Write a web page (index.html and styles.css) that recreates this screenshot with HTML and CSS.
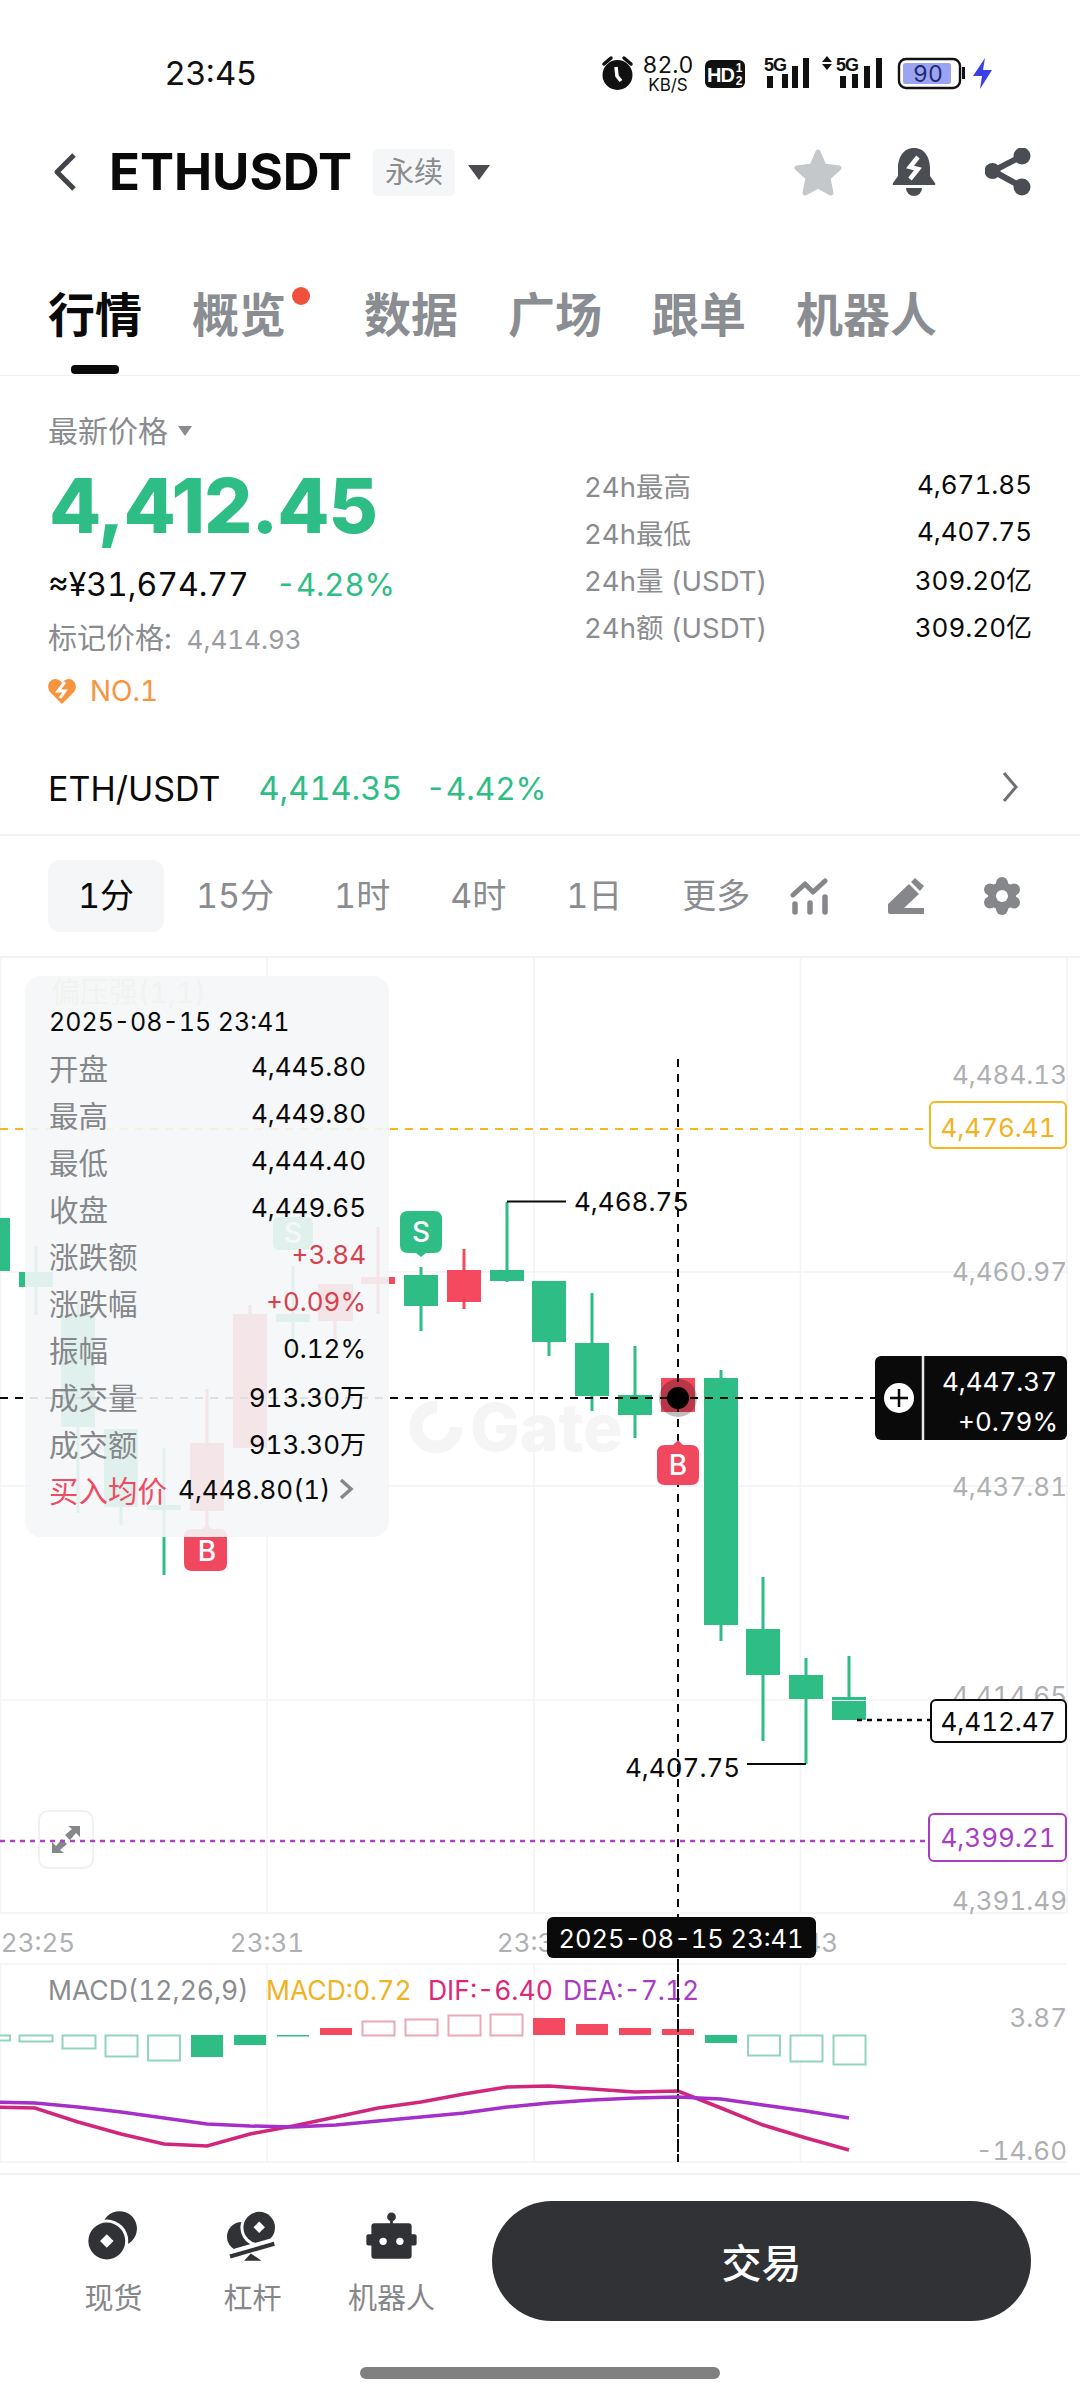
FILE: index.html
```html
<!DOCTYPE html>
<html lang="zh">
<head>
<meta charset="utf-8">
<title>ETHUSDT</title>
<link rel="stylesheet" href="styles.css">
</head>
<body>
<div class="page">
  <div class="status">
    <span class="clock">23:45</span>
    <svg class="status-icons" viewBox="600 50 400 45" width="400" height="45">
      <circle cx="617.5" cy="74" r="15" fill="#111"/>
      <path d="M604 63l7-6M631 63l-7-6" stroke="#111" stroke-width="3.5" stroke-linecap="round"/>
      <path d="M616 66l1 9 4 5" stroke="#fff" stroke-width="3.5" fill="none"/>
      <text class="st-num" x="668" y="72">82.0</text>
      <text class="st-unit" x="668" y="90">KB/S</text>
      <rect x="705" y="59" width="40" height="28" rx="6" fill="#111"/>
      <text class="st-hd" x="707" y="81">HD</text>
      <text class="st-hd2" x="739" y="71">1</text>
      <text class="st-hd2" x="739" y="84">2</text>
      <text class="st-5g" x="764" y="70">5G</text>
      <path d="M767 75h6v12h-6zM782 73h6v14h-6zM792 65h6v22h-6zM803 57h6v30h-6z" fill="#111"/>
      <path d="M827 55l5 6h-10zM827 69l5-6h-10z" fill="#111"/>
      <text class="st-5g" x="836" y="70">5G</text>
      <path d="M840 75h6v12h-6zM852 73h6v14h-6zM864 65h6v22h-6zM876 57h6v30h-6z" fill="#111"/>
      <rect x="899" y="58" width="61" height="29" rx="7" fill="#fff" stroke="#111" stroke-width="2.4"/>
      <rect x="903" y="62" width="48" height="21" rx="2" fill="#9aa4f2"/>
      <path d="M962 66h3v12h-3z" fill="#111"/>
      <text class="st-batt" x="928" y="81">90</text>
      <path d="M985 57l-12 18h9l-2 13 12-19h-9z" fill="#3a40e8"/>
    </svg>
  </div>

  <div class="header">
    <svg class="back" width="26" height="40" viewBox="0 0 26 40"><path d="M22 3L5 20l17 17" fill="none" stroke="#41444a" stroke-width="5" stroke-linejoin="round"/></svg>
    <span class="symbol">ETHUSDT</span>
    <span class="tag">永续</span>
    <span class="tri tri-big"></span>
    <div class="header-actions">
      <svg width="50" height="48" viewBox="0 0 50 48"><path d="M25 4l6 14 15 2-11 10 3 15-13-7-13 7 3-15L4 20l15-2z" fill="#c4c8ca" stroke="#c4c8ca" stroke-width="5" stroke-linejoin="round"/></svg>
      <svg width="44" height="48" viewBox="0 0 44 48"><path d="M22 0C11 0 6 10 6 20v8l-5 7q-1 2 1 2h40q2 0 1-2l-5-7v-8C38 10 33 0 22 0z" fill="#4b4d55"/><path d="M14 40h16a8 8 0 0 1-16 0z" fill="#4b4d55"/><path d="M26 9l-8 10 8 2-8 10" fill="none" stroke="#fff" stroke-width="4.5"/></svg>
      <svg width="46" height="48" viewBox="0 0 46 48"><path d="M37 8L8 23l29 16" fill="none" stroke="#4b4d55" stroke-width="6"/><circle cx="37" cy="8" r="8.5" fill="#4b4d55"/><circle cx="7.500" cy="23" r="8" fill="#4b4d55"/><circle cx="37" cy="39" r="8.5" fill="#4b4d55"/></svg>
    </div>
  </div>

  <div class="tabs">
    <div class="tab tab-active">行情<i class="tab-bar"></i></div>
    <div class="tab tab-dot">概览<i class="dot"></i></div>
    <div class="tab">数据</div>
    <div class="tab">广场</div>
    <div class="tab">跟单</div>
    <div class="tab">机器人</div>
  </div>

  <div class="quote">
    <div class="quote-left">
      <div class="latest">最新价格<span class="tri tri-small"></span></div>
      <div class="price">4,412.45</div>
      <div class="cny"><span class="cny-val">≈¥31,674.77</span><span class="green cny-pct">-4.28%</span></div>
      <div class="mark">标记价格: <span class="mark-num">4,414.93</span></div>
      <div class="rank">
        <svg width="28" height="26" viewBox="0 0 28 26"><path d="M14 26L2 14C-2 9 1 1 7 1c3 0 5 1 7 4 2-3 4-4 7-4 6 0 9 8 5 13z" fill="#f7953f"/><path d="M17 4l-7 9h7l-5 7" fill="none" stroke="#fff" stroke-width="3"/></svg>
        <span>NO.1</span>
      </div>
    </div>
    <div class="quote-right">
      <div class="stat"><span>24h最高</span><b>4,671.85</b></div>
      <div class="stat"><span>24h最低</span><b>4,407.75</b></div>
      <div class="stat"><span>24h量 (USDT)</span><b>309.20亿</b></div>
      <div class="stat"><span>24h额 (USDT)</span><b>309.20亿</b></div>
    </div>
  </div>

  <div class="spot">
    <span class="spot-name">ETH/USDT</span>
    <span class="green spot-price">4,414.35</span>
    <span class="green spot-change">-4.42%</span>
    <svg class="spot-arrow" width="16" height="32" viewBox="0 0 16 32"><path d="M2 2l12 14L2 30" fill="none" stroke="#6d7075" stroke-width="3"/></svg>
  </div>

  <div class="intervals">
    <div class="iv-list">
      <span class="iv iv-active">1分</span>
      <span class="iv">15分</span>
      <span class="iv">1时</span>
      <span class="iv">4时</span>
      <span class="iv">1日</span>
      <span class="iv">更多</span>
    </div>
    <div class="iv-icons">
      <svg width="38" height="38" viewBox="0 0 38 38"><path d="M3 18l12-11 8 8L35 4" fill="none" stroke="#85878b" stroke-width="5" stroke-linecap="round" stroke-linejoin="round"/><path d="M6 27v8M21 26v9M36 20v15" transform="translate(-1 0)" stroke="#85878b" stroke-width="5.500" stroke-linecap="round"/></svg>
      <svg width="36" height="36" viewBox="0 0 36 36"><path d="M0 26L21 6l10 10-15 14h20v6H2q-2 0-2-2z" fill="#85878b"/><path d="M23 4l4-4 9 8-4 5z" fill="#85878b"/></svg>
      <svg width="36" height="38" viewBox="0 0 36 38"><g fill="#85878b"><circle cx="18" cy="19" r="14"/><circle cx="18" cy="6" r="6"/><circle cx="18" cy="32" r="6"/><circle cx="6" cy="12.500" r="6"/><circle cx="30" cy="12.500" r="6"/><circle cx="6" cy="25.500" r="6"/><circle cx="30" cy="25.500" r="6"/></g><circle cx="18" cy="19" r="6" fill="#fff"/></svg>
    </div>
  </div>

  <div class="chart">
    <svg class="chart-svg" viewBox="0 958 1080 1215" width="1080" height="1215">
      <!-- grid -->
      <path class="grid" d="M.5 958V1913M267 958V1913M534 958V1913M800.500 958V1913M1067 958V1913M.5 1964V2162M267 1964V2162M534 1964V2162M800.500 1964V2162M0 1272H1067M0 1486H1067M0 1700H1067M0 1913H1067M0 1964H1067M0 2162H1067"/>

      <!-- watermark -->
      <circle class="wm-ring" cx="436" cy="1427" r="20" stroke-dasharray="95 40"/>
      <text class="wm" x="470" y="1451">Gate</text>

      <text class="legend-faint" x="51" y="992">偏压强(1,1)</text>

      <!-- candles -->
      <path class="wick-up" d="M849 1656V1697M806 1658V1764M763 1577V1741M721 1370V1641M635 1346V1438M592 1293V1411M549 1281V1356M507 1202V1282M421 1267V1331M293 1266V1356M164 1448V1575M121 1429V1525M78 1300V1513M36 1246V1315"/>
      <path class="wick-down" d="M464 1249V1309M378 1227V1314M335 1284V1340M250 1305V1448M207 1389V1529"/>
      <path class="body-up" d="M832 1697h34v23h-34zM789 1675h34v24h-34zM746 1629h34v46h-34zM704 1378h34v247h-34zM618 1395h34v20h-34zM575 1343h34v53h-34zM532 1281h34v61h-34zM490 1270h34v11h-34zM404 1275h34v31h-34zM276 1314h34v8h-34zM147 1505h34v5h-34zM104 1429h34v78h-34zM61 1315h34v112h-34zM19 1272h34v15h-34zM-24 1218h34v53h-34z"/>
      <path class="body-down" d="M661 1378h34v34h-34zM447 1270h34v32h-34zM361 1277h34v7h-34zM318 1284h35v37h-35zM233 1314h34v134h-34zM190 1443h34v68h-34z"/>
      <path d="M832 1700.500h34" stroke="#fff" stroke-width="1"/>

      <!-- buy/sell marks -->
      <path class="mark-s" d="M408 1211h26q8 0 8 8v26q0 8-8 8h-8l-5 4-5-4h-8q-8 0-8-8v-26q0-8 8-8z"/>
      <text class="mark-text" x="421" y="1232">S</text>
      <path class="mark-s" d="M280 1217h26q7 0 7 7v19q0 7-7 7h-26q-7 0-7-7v-19q0-7 7-7z"/>
      <text class="mark-text" x="293" y="1233">S</text>
      <path class="mark-b" d="M194 1529h8l5-4 5 4h7q8 0 8 8v26q0 8-8 8h-27q-8 0-8-8v-26q0-8 8-8z"/>
      <text class="mark-text" x="207" y="1551">B</text>

      <!-- high / low -->
      <path class="pointer" d="M507 1201.500h59M747 1764h59"/>
      <text class="val-start" x="574" y="1201">4,468.75</text>
      <text class="val-start" x="625" y="1767">4,407.75</text>

      <!-- axis -->
      <text class="axis" x="1067" y="1074">4,484.13</text>
      <text class="axis" x="1067" y="1271">4,460.97</text>
      <text class="axis" x="1067" y="1486">4,437.81</text>
      <text class="axis" x="1067" y="1695">4,414.65</text>
      <text class="axis" x="1067" y="1900">4,391.49</text>
      <text class="axis" x="1067" y="2017">3.87</text>
      <text class="axis" x="1067" y="2150">-14.60</text>
      <text class="time" x="38" y="1942">23:25</text>
      <text class="time" x="267" y="1942">23:31</text>
      <text class="time" x="534" y="1942">23:37</text>
      <text class="time" x="801" y="1942">23:43</text>

      <!-- level lines -->
      <path class="dash-yellow" d="M0 1129H929"/>
      <rect class="box-yellow" x="930" y="1102" width="136" height="46" rx="5"/>
      <text class="box-text t-yellow" x="998" y="1127">4,476.41</text>
      <rect class="expand" x="39" y="1811" width="54" height="57" rx="9"/>
      <path class="expand-arrows" d="M80 1826v11l-4-4-6 7-5-5 7-6-4-3zM52 1853v-11l4 4 6-7 5 5-7 6 4 3z"/>
      <path class="dash-purple" d="M0 1841H929"/>
      <rect class="box-purple" x="929" y="1814" width="137" height="47" rx="5"/>
      <text class="box-text t-purple" x="998" y="1837">4,399.21</text>
      <path class="dash-last" d="M857 1720H930"/>
      <rect class="box-last" x="931" y="1700" width="135" height="42" rx="5"/>
      <text class="box-text t-black" x="998" y="1721">4,412.47</text>

      <!-- crosshair -->
      <path class="cross" d="M0 1398H875M678 1059V2162"/>
      <circle cx="678" cy="1398" r="19" fill="#000" opacity=".25"/>
      <circle cx="678" cy="1398" r="11" fill="#000"/>
      <path class="mark-b" d="M665 1445h8l5-5 5 5h8q8 0 8 8v24q0 8-8 8h-26q-8 0-8-8v-24q0-8 8-8z"/>
      <text class="mark-text" x="678" y="1465">B</text>

      <!-- crosshair price -->
      <rect x="875" y="1356" width="192" height="84" rx="6" fill="#0a0a0a"/>
      <path d="M923 1356v84" stroke="#e8e8e8" stroke-width="2.500"/>
      <circle cx="899" cy="1398" r="15" fill="#fff"/>
      <path d="M890 1398h18M899 1389v18" stroke="#0a0a0a" stroke-width="2.500"/>
      <text class="cross-text" x="1057" y="1381">4,447.37</text>
      <text class="cross-text" x="1058" y="1421">+0.79%</text>

      <!-- crosshair time -->
      <rect x="547" y="1917" width="269" height="41" rx="6" fill="#0a0a0a"/>
      <text class="time-tip" x="681" y="1938">2025-08-15 23:41</text>

      <!-- MACD -->
      <text class="ml ml-gray" x="48" y="1990">MACD(12,26,9)</text>
      <text class="ml ml-yellow" x="266" y="1990">MACD:0.72</text>
      <text class="ml ml-pink" x="428" y="1990">DIF:-6.40</text>
      <text class="ml ml-purple" x="563" y="1990">DEA:-7.12</text>

      <path class="bar-up-o" d="M-10 2035.500h20v5h-20zM19.500 2035.500h33v6h-33zM62.500 2035.500h33v13h-33zM105.500 2035.500h32v21h-32zM148 2035.500h32v25h-32zM748 2035.500h32v20h-32zM790.500 2035.500h32v26h-32zM833.500 2035.500h32v29h-32z"/>
      <path class="body-up" d="M191 2035h32v22h-32zM234 2035h32v10h-32zM277 2035h32v1.500h-32zM705 2035h32v8h-32z"/>
      <path class="bar-down-o" d="M362.500 2021.500h32v14h-32zM405.500 2019.500h32v16h-32zM448.500 2015.500h32v20h-32zM490.500 2014.500h32v21h-32z"/>
      <path class="body-down" d="M320 2028h32v7h-32zM533 2018h32v17h-32zM576 2024h32v11h-32zM619 2028h32v7h-32zM662 2029h32v6h-32z"/>
      <polyline class="line-dif" points="-7,2107 35,2108 78,2122 121,2134 164,2144 207,2146 250,2134 293,2126 336,2117 378,2108 421,2102 464,2094 507,2087 549,2086 592,2089 635,2092 678,2091 721,2108 763,2125 806,2138 849,2150"/>
      <polyline class="line-dea" points="-7,2102 35,2103 78,2107 121,2112 164,2118 207,2124 250,2126 293,2127 336,2125 378,2121 421,2117 464,2113 507,2107 549,2103 592,2100 635,2098 678,2097 721,2099 763,2105 806,2111 849,2118"/>
      <path class="cross" d="M678 1964V2162"/>
    </svg>

    <div class="tip">
      <div class="tip-date">2025-08-15 23:41</div>
      <div class="tip-row"><span>开盘</span><b>4,445.80</b></div>
      <div class="tip-row"><span>最高</span><b>4,449.80</b></div>
      <div class="tip-row"><span>最低</span><b>4,444.40</b></div>
      <div class="tip-row"><span>收盘</span><b>4,449.65</b></div>
      <div class="tip-row"><span>涨跌额</span><b class="red">+3.84</b></div>
      <div class="tip-row"><span>涨跌幅</span><b class="red">+0.09%</b></div>
      <div class="tip-row"><span>振幅</span><b>0.12%</b></div>
      <div class="tip-row"><span>成交量</span><b>913.30万</b></div>
      <div class="tip-row"><span>成交额</span><b>913.30万</b></div>
      <div class="tip-buy">
        <span class="tip-buy-label">买入均价</span>
        <b>4,448.80(1)</b>
        <svg width="16" height="22" viewBox="0 0 16 22"><path d="M3 2l10 9-10 9" fill="none" stroke="#85878b" stroke-width="3.500"/></svg>
      </div>
    </div>
  </div>

  <div class="bottom">
    <div class="tool">
      <svg width="57" height="54" viewBox="80 90 170 160"><circle cx="183" cy="148" r="52" fill="#303236"/><circle cx="145" cy="185" r="64" fill="#fff"/><circle cx="145" cy="185" r="55" fill="#303236"/><path d="M145 165l20 20-20 20-20-20z" fill="#fff"/></svg>
      <span>现货</span>
    </div>
    <div class="tool">
      <svg width="57" height="54" viewBox="495 90 170 160"><circle cx="548" cy="172" r="44" fill="#303236"/><circle cx="600" cy="145" r="56" fill="#fff"/><circle cx="600" cy="145" r="47" fill="#303236"/><path d="M600 127l17 17-17 17-17-17z" fill="#fff"/><path d="M505 226l150-42" stroke="#fff" stroke-width="24"/><path d="M513 231l132-38" stroke="#303236" stroke-width="12"/><path d="M575 222l32 22h-52z" fill="#303236"/></svg>
      <span>杠杆</span>
    </div>
    <div class="tool">
      <svg width="57" height="54" viewBox="905 80 170 160"><circle cx="990" cy="103" r="13" fill="#303236"/><path d="M986 105h8v20h-8z" fill="#303236"/><rect x="930" y="122" width="120" height="106" rx="9" fill="#303236"/><rect x="915" y="155" width="150" height="33" rx="6" fill="#303236"/><circle cx="965" cy="176" r="11" fill="#fff"/><circle cx="1015" cy="176" r="11" fill="#fff"/></svg>
      <span>机器人</span>
    </div>
    <button class="trade">交易</button>
  </div>
  <div class="home"></div>
</div>
</body>
</html>
```

FILE: styles.css
```css
* { box-sizing: border-box; }
html, body { margin: 0; padding: 0; background: #fff; }
body { font-family: Inter, "Noto Sans CJK SC", sans-serif; color: #0a0a0a; font-variant-numeric: tabular-nums; }
.page { width: 1080px; height: 2400px; overflow: hidden; display: flex; flex-direction: column; }

/* status */
.status { height: 146px; flex: none; display: flex; align-items: center; justify-content: space-between; padding: 0 80px 0 165px; }
.clock { font-size: 33px; line-height: 40px; color: #111; font-variant-numeric: normal; }
.status-icons { display: block; }
.st-num { font-size: 23px; text-anchor: middle; fill: #111; }
.st-unit { font-size: 17px; text-anchor: middle; fill: #111; }
.st-hd { font: 700 20px "Liberation Sans", sans-serif; fill: #fff; letter-spacing: -1px; }
.st-hd2 { font: 700 12px "Liberation Sans", sans-serif; fill: #fff; text-anchor: middle; }
.st-5g { font: 700 18px "Liberation Sans", sans-serif; fill: #111; letter-spacing: -1px; }
.st-batt { font-size: 23px; text-anchor: middle; fill: #1f2a6e; }

/* header */
.header { height: 52px; flex: none; display: flex; align-items: center; padding-left: 52px; }
.back { flex: none; }
.symbol { font-size: 51px; font-weight: 700; line-height: 52px; margin-left: 31px; color: #0a0a0a; }
.tag { margin-left: 21px; width: 82px; height: 47px; background: #f5f6f7; border-radius: 5px; color: #8a8c90; font-size: 29px; line-height: 47px; text-align: center; }
.tri { display: inline-block; width: 0; height: 0; border-style: solid; border-color: #4a4c52 transparent transparent; }
.tri-big { border-width: 15px 11.500px 0; margin-left: 13px; }
.header-actions { margin-left: auto; padding-right: 49px; display: flex; gap: 49px; align-items: center; }
.header-actions svg { display: block; }

/* tabs */
.tabs { height: 178px; flex: none; padding: 94px 0 0 48px; display: flex; gap: 50px; border-bottom: 1px solid #f0f1f2; }
.tab { position: relative; font-size: 47px; line-height: 46px; font-weight: 700; color: #8a8d91; height: 46px; }
.tab-dot { margin-right: 28px; }
.tab-active { color: #0a0a0a; }
.tab-bar { position: absolute; left: 23px; top: 73px; width: 48px; height: 9px; border-radius: 4px; background: #0a0a0a; }
.dot { position: absolute; left: 100px; top: -5px; width: 18px; height: 18px; border-radius: 50%; background: #f0503c; }

/* quote */
.quote { flex: none; height: 332px; display: flex; padding-left: 48px; }
.quote-left { width: 536px; padding-top: 37px; }
.latest { font-size: 30px; line-height: 36px; color: #8a8c90; display: flex; align-items: center; }
.tri-small { border-color: #8a8c90 transparent transparent; border-width: 10px 7.500px 0; margin-left: 10px; }
.price { margin-top: 16px; font-size: 76px; line-height: 80px; font-weight: 800; color: #2dbd85; letter-spacing: -1px; margin-left: 1px; font-variant-numeric: normal; }
.cny { margin-top: 22px; display: flex; gap: 27px; font-size: 32px; line-height: 36px; }
.cny-pct { font-size: 31px; }
.green { color: #2dbd85; }
.red { color: #d8404c; }
.mark { margin-top: 18px; font-size: 29px; line-height: 36px; color: #8a8c90; }
.mark-num { font-size: 26px; color: #9a9c9f; margin-left: 7px; }
.rank { margin-top: 15px; display: flex; align-items: center; gap: 14px; font-size: 28px; line-height: 36px; color: #f7953f; }
.quote-right { width: 448px; padding-top: 85px; }
.stat { height: 47px; display: flex; justify-content: space-between; align-items: center; font-size: 27.500px; color: #8a8c90; }
.stat b { font-weight: 400; font-size: 26px; color: #0a0a0a; }

/* spot */
.spot { flex: none; height: 128px; padding: 34px 62px 0 48px; display: flex; align-items: center; gap: 23px; font-size: 33px; border-bottom: 2px solid #f1f2f3; }
.spot-name { margin-right: 15px; color: #0a0a0a; font-size: 34px; }
.spot-price { font-size: 32.500px; }
.spot-change { font-size: 31.500px; }
.spot-arrow { margin-left: auto; margin-top: -2px; }

/* intervals */
.intervals { flex: none; height: 122px; padding: 0 60px 0 48px; display: flex; align-items: center; justify-content: space-between; border-bottom: 2px solid #f1f2f3; }
.iv-list { display: flex; align-items: center; gap: 60px; }
.iv { font-size: 34px; line-height: 72px; color: #8a8c90; white-space: nowrap; flex: none; }
.iv-active { width: 116px; height: 72px; margin-right: -28px; border-radius: 12px; background: #f5f6f7; color: #0a0a0a; text-align: center; }
.iv-icons { display: flex; gap: 60px; align-items: center; }
.iv-icons svg { display: block; }

/* chart */
.chart { position: relative; flex: none; height: 1215px; }
.chart-svg { display: block; }
.chart-svg text { dominant-baseline: central; }
.grid { stroke: #f3f4f5; stroke-width: 1.500; fill: none; }
.chart-svg .wm { font-size: 66px; font-weight: 800; fill: #f5f5f6; dominant-baseline: auto; }
.wm-ring { fill: none; stroke: #f5f5f6; stroke-width: 13; }
.legend-faint { font-size: 29px; fill: #d9c98c; }
.wick-up { stroke: #2dbd85; stroke-width: 3; fill: none; }
.wick-down { stroke: #f5495f; stroke-width: 3; fill: none; }
.body-up { fill: #2dbd85; }
.body-down { fill: #f5495f; }
.bar-up-o { fill: #fff; stroke: #8fd6bc; stroke-width: 2; }
.bar-down-o { fill: #fff; stroke: #eba8b5; stroke-width: 2; }
.mark-s { fill: #2dbd85; }
.mark-b { fill: #f0485f; }
.mark-text { font-size: 28px; font-weight: 500; fill: #fff; text-anchor: middle; }
.pointer { stroke: #0a0a0a; stroke-width: 2; fill: none; }
.val-start { font-size: 26px; fill: #0a0a0a; }
.axis { font-size: 26px; fill: #aeb0b3; text-anchor: end; }
.time { font-size: 26px; fill: #aeb0b3; text-anchor: middle; }
.dash-yellow { stroke: #f5b91f; stroke-width: 2; stroke-dasharray: 8 7; fill: none; }
.dash-purple { stroke: #b040c8; stroke-width: 2.500; stroke-dasharray: 5 5; fill: none; }
.dash-last { stroke: #0a0a0a; stroke-width: 2.500; stroke-dasharray: 5 5; fill: none; }
.box-yellow { fill: #fff; stroke: #f5b91f; stroke-width: 2; }
.box-purple { fill: #fff; stroke: #a83dc4; stroke-width: 2; }
.box-last { fill: #fff; stroke: #0a0a0a; stroke-width: 2; }
.box-text { font-size: 26px; text-anchor: middle; }
.t-yellow { fill: #f0b323; }
.t-purple { fill: #a83dc4; }
.t-black { fill: #0a0a0a; }
.expand { fill: #fff; stroke: #f0f1f2; stroke-width: 2; }
.expand-arrows { fill: #85878b; }
.cross { stroke: #0a0a0a; stroke-width: 2; stroke-dasharray: 8 7; fill: none; }
.cross-text { font-size: 26px; fill: #fff; text-anchor: end; }
.time-tip { font-size: 25.500px; fill: #fff; text-anchor: middle; }
.ml { font-size: 26.500px; }
.ml-gray { fill: #8a8c90; }
.ml-yellow { fill: #f0b323; }
.ml-pink { fill: #dc2878; }
.ml-purple { fill: #a83dc4; }
.line-dif { fill: none; stroke: #d2257c; stroke-width: 3.500; }
.line-dea { fill: none; stroke: #a52fc8; stroke-width: 3.500; }

/* tooltip */
.tip { position: absolute; left: 25px; top: 18px; width: 364px; height: 561px; padding: 23px 23px 0 24px; border-radius: 16px; background: rgba(244, 246, 248, .9); }
.tip-date { height: 44px; line-height: 47px; font-size: 25px; color: #0a0a0a; white-space: nowrap; }
.tip-row { height: 47px; display: flex; justify-content: space-between; align-items: center; font-size: 29.500px; color: #85878b; }
.tip-row b { font-weight: 400; font-size: 26px; color: #0a0a0a; }
.tip-row b.red { color: #d8404c; }
.tip-buy { height: 46px; display: flex; align-items: center; font-size: 29.500px; }
.tip-buy-label { color: #ef4b63; }
.tip-buy b { font-weight: 400; font-size: 26px; margin-left: 11px; color: #0a0a0a; white-space: nowrap; }
.tip-buy svg { margin-left: 8px; }

/* bottom bar */
.bottom { flex: none; height: 194px; display: flex; align-items: flex-start; padding: 0 49px 0 44px; border-top: 2px solid #f1f2f3; }
.tool { width: 139px; padding-top: 34px; display: flex; flex-direction: column; align-items: center; font-size: 29px; color: #85878b; }
.tool svg { display: block; }
.tool span { margin-top: 18px; line-height: 36px; }
.trade { margin-left: auto; margin-top: 26px; width: 539px; height: 120px; border: 0; border-radius: 60px; background: #303236; color: #fff; font: 500 40px Inter, "Noto Sans CJK SC", sans-serif; }
.home { flex: none; width: 360px; height: 12px; margin: 0 auto; border-radius: 6px; background: #808080; }
```
